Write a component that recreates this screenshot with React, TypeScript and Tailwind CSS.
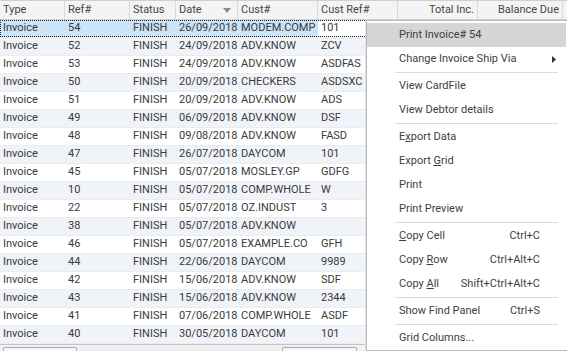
import { ReactNode } from "react";

type Row = {
  ref: string;
  date: string;
  cust: string;
  custRef: string;
};

const rows: Row[] = [
  { ref: "54", date: "26/09/2018", cust: "MODEM.COMP", custRef: "101" },
  { ref: "52", date: "24/09/2018", cust: "ADV.KNOW", custRef: "ZCV" },
  { ref: "53", date: "24/09/2018", cust: "ADV.KNOW", custRef: "ASDFAS" },
  { ref: "50", date: "20/09/2018", cust: "CHECKERS", custRef: "ASDSXC" },
  { ref: "51", date: "20/09/2018", cust: "ADV.KNOW", custRef: "ADS" },
  { ref: "49", date: "06/09/2018", cust: "ADV.KNOW", custRef: "DSF" },
  { ref: "48", date: "09/08/2018", cust: "ADV.KNOW", custRef: "FASD" },
  { ref: "47", date: "26/07/2018", cust: "DAYCOM", custRef: "101" },
  { ref: "45", date: "05/07/2018", cust: "MOSLEY.GP", custRef: "GDFG" },
  { ref: "10", date: "05/07/2018", cust: "COMP.WHOLE", custRef: "W" },
  { ref: "22", date: "05/07/2018", cust: "OZ.INDUST", custRef: "3" },
  { ref: "38", date: "05/07/2018", cust: "ADV.KNOW", custRef: "" },
  { ref: "46", date: "05/07/2018", cust: "EXAMPLE.CO", custRef: "GFH" },
  { ref: "44", date: "22/06/2018", cust: "DAYCOM", custRef: "9989" },
  { ref: "42", date: "15/06/2018", cust: "ADV.KNOW", custRef: "SDF" },
  { ref: "43", date: "15/06/2018", cust: "ADV.KNOW", custRef: "2344" },
  { ref: "41", date: "07/06/2018", cust: "COMP.WHOLE", custRef: "ASDF" },
  { ref: "40", date: "30/05/2018", cust: "DAYCOM", custRef: "101" },
];

const HeaderCell = ({ className, children }: { className: string; children?: ReactNode }) => (
  <div className={`flex h-full items-center border-r border-[#d8d8d8] px-[3px] ${className}`}>
    {children}
  </div>
);

const MenuItem = ({
  label,
  shortcut,
  active,
  arrow,
}: {
  label: ReactNode;
  shortcut?: string;
  active?: boolean;
  arrow?: boolean;
}) => (
  <div
    className={`flex h-[24px] items-center justify-between pl-[32px] pr-[26px] ${
      active ? "bg-[#d5d5d5]" : ""
    }`}
  >
    <span>{label}</span>
    {shortcut && <span>{shortcut}</span>}
    {arrow && (
      <svg width="4" height="7" viewBox="0 0 4 7" className="mr-[-16px]">
        <path d="M0 0 L4 3.5 L0 7 Z" fill="#333" />
      </svg>
    )}
  </div>
);

const Separator = () => (
  <div className="ml-[28px] mr-[8px] flex h-[3px] items-center">
    <div className="h-px w-full bg-[#dcdcdc]" />
  </div>
);

const App = () => {
  return (
    <div className="relative h-[351px] w-[567px] overflow-hidden bg-white font-['Roboto',sans-serif] text-[11px] text-[#3a3a3a]">
      {/* HEADER */}
      <div className="flex h-[20px] border-y border-[#d0d0d0] bg-[#f4f4f4] text-[#454545]">
        <HeaderCell className="w-[65px]">Type</HeaderCell>
        <HeaderCell className="w-[65px]">Ref#</HeaderCell>
        <HeaderCell className="w-[46px]">Status</HeaderCell>
        <HeaderCell className="w-[62px] justify-between">
          <span>Date</span>
          <svg width="8" height="5" viewBox="0 0 8 5" className="mr-[3px]">
            <path d="M0 0 H8 L4 5 Z" fill="#8a8a8a" />
          </svg>
        </HeaderCell>
        <HeaderCell className="w-[80px]">Cust#</HeaderCell>
        <HeaderCell className="w-[80px]">Cust Ref#</HeaderCell>
        <HeaderCell className="w-[80px] justify-end">Total Inc.</HeaderCell>
        <HeaderCell className="w-[85px] justify-end">Balance Due</HeaderCell>
        <div className="flex-1" />
      </div>

      {/* ROWS */}
      <div className="flex flex-col">
        {rows.map((r, i) => {
          const selected = i === 0;
          const rowBg = i % 2 === 1 ? "bg-[#f0f4f9]" : "bg-white";
          const cellBg = selected ? "bg-[#cde3f7]" : "";
          return (
            <div
              key={r.ref + i}
              className={`relative flex h-[18px] items-center border-b border-[#e9edf2] ${rowBg}`}
            >
              <div className={`flex h-full w-[65px] items-center pl-[3px] ${cellBg}`}>Invoice</div>
              <div className={`flex h-full w-[65px] items-center pl-[3px] ${cellBg}`}>{r.ref}</div>
              <div className={`flex h-full w-[46px] items-center pl-[3px] ${cellBg}`}>FINISH</div>
              <div className={`flex h-full w-[62px] items-center pl-[3px] ${cellBg}`}>{r.date}</div>
              <div className={`flex h-full w-[80px] items-center pl-[3px] ${cellBg}`}>{r.cust}</div>
              <div className="flex h-full w-[80px] items-center pl-[3px]">{r.custRef}</div>
              <div className="h-full w-[80px]" />
              <div className="h-full flex-1" />
              {selected && (
                <div className="pointer-events-none absolute inset-0 border border-dotted border-[#222]" />
              )}
            </div>
          );
        })}
      </div>

      {/* SCROLLBAR */}
      <div className="relative flex h-[8px] items-end border-t border-[#c4c4c4] bg-[#f0f0f0]">
        <div className="ml-[3px] h-[5px] w-[74px] rounded-t-[2px] border border-b-0 border-[#a8a8a8] bg-[#f7f7f7]" />
        <div className="ml-[205px] h-[5px] w-[75px] rounded-t-[2px] border border-b-0 border-[#a8a8a8] bg-[#f7f7f7]" />
      </div>

      {/* CONTEXT MENU */}
      <div className="absolute left-[365px] top-[20px] h-[331px] w-[203px] border-l border-[#e4e4e4]">
        <div className="h-full w-full border border-[#b9b9b9] bg-white pt-[2px] pr-px text-[#3c3f45]">
          <MenuItem label="Print Invoice# 54" active />
          <MenuItem label="Change Invoice Ship Via" arrow />
          <Separator />
          <MenuItem label="View CardFile" />
          <MenuItem label="View Debtor details" />
          <Separator />
          <MenuItem label={<>E<u>x</u>port Data</>} />
          <MenuItem label={<>Export <u>G</u>rid</>} />
          <MenuItem label="Print" />
          <MenuItem label="Print Preview" />
          <Separator />
          <MenuItem label={<><u>C</u>opy Cell</>} shortcut="Ctrl+C" />
          <MenuItem label={<>Copy <u>R</u>ow</>} shortcut="Ctrl+Alt+C" />
          <MenuItem label={<>Copy <u>A</u>ll</>} shortcut="Shift+Ctrl+Alt+C" />
          <Separator />
          <MenuItem label="Show Find Panel" shortcut="Ctrl+S" />
          <Separator />
          <MenuItem label="Grid Columns..." />
        </div>
      </div>
    </div>
  );
};

export default App;
